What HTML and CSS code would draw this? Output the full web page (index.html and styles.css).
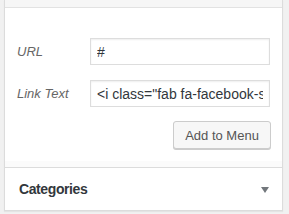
FILE: index.html
```html
<!DOCTYPE html>
<html>
<head>
<meta charset="utf-8">
<link rel="stylesheet" href="styles.css">
</head>
<body>
<div class="panel">
  <div class="top-strip"></div>
  <div class="content">
    <div class="form">
      <label class="label">URL</label>
      <input class="field" type="text" value="#">
      <label class="label">Link Text</label>
      <input class="field" type="text" value="&lt;i class=&quot;fab fa-facebook-square&quot;&gt;&lt;/i&gt;">
    </div>
    <div class="actions">
      <button class="button">Add to Menu</button>
    </div>
  </div>
  <div class="band"></div>
  <div class="section-head">
    <span class="section-title">Categories</span>
    <span class="arrow"></span>
  </div>
</div>
</body>
</html>
```
FILE: styles.css
```css
html, body {
  margin: 0;
  padding: 0;
}
body {
  background: #f1f1f1;
  width: 289px;
  height: 214px;
  overflow: hidden;
  font-family: "Liberation Sans", Arial, sans-serif;
  color: #444;
}
.panel {
  margin-left: 4px;
  width: 277px;
  background: #fff;
  border: 1px solid #dcdcdc;
  border-top: 0;
  box-shadow: 0 1px 1px rgba(0,0,0,.05);
}
.top-strip {
  height: 7px;
  background: #f6f6f6;
  border-bottom: 1px solid #e2e2e2;
}
.content {
  padding: 30px 11px 12px 12px;
}
.form {
  display: grid;
  grid-template-columns: 73px 180px;
  row-gap: 15px;
  align-items: center;
}
.label {
  font-style: italic;
  font-size: 13px;
  color: #666;
}
.field {
  box-sizing: border-box;
  width: 180px;
  height: 27px;
  margin: 0;
  padding: 0 6px;
  border: 1px solid #ddd;
  box-shadow: inset 0 1px 2px rgba(0,0,0,.07);
  background: #fff;
  color: #32373c;
  font-family: "Liberation Sans", Arial, sans-serif;
  font-size: 14px;
  outline: none;
}
.actions {
  display: flex;
  justify-content: flex-end;
  margin-top: 14px;
}
.button {
  box-sizing: border-box;
  width: 98px;
  height: 28px;
  margin: 0;
  padding: 0;
  background: #f7f7f7;
  border: 1px solid #ccc;
  border-radius: 3px;
  box-shadow: 0 1px 0 #ccc;
  color: #555;
  font-family: "Liberation Sans", Arial, sans-serif;
  font-size: 13px;
}
.band {
  height: 6px;
  background: #fbfbfb;
  border-bottom: 1px solid #dcdcdc;
}
.section-head {
  height: 42px;
  display: flex;
  align-items: center;
  justify-content: space-between;
  padding: 0 13px 0 14px;
}
.section-title {
  font-size: 14px;
  font-weight: 600;
  color: #32373c;
  letter-spacing: -0.4px;
}
.arrow {
  width: 0;
  height: 0;
  border-left: 4px solid transparent;
  border-right: 4px solid transparent;
  border-top: 6px solid #72777c;
  margin-top: 2px;
}
```
